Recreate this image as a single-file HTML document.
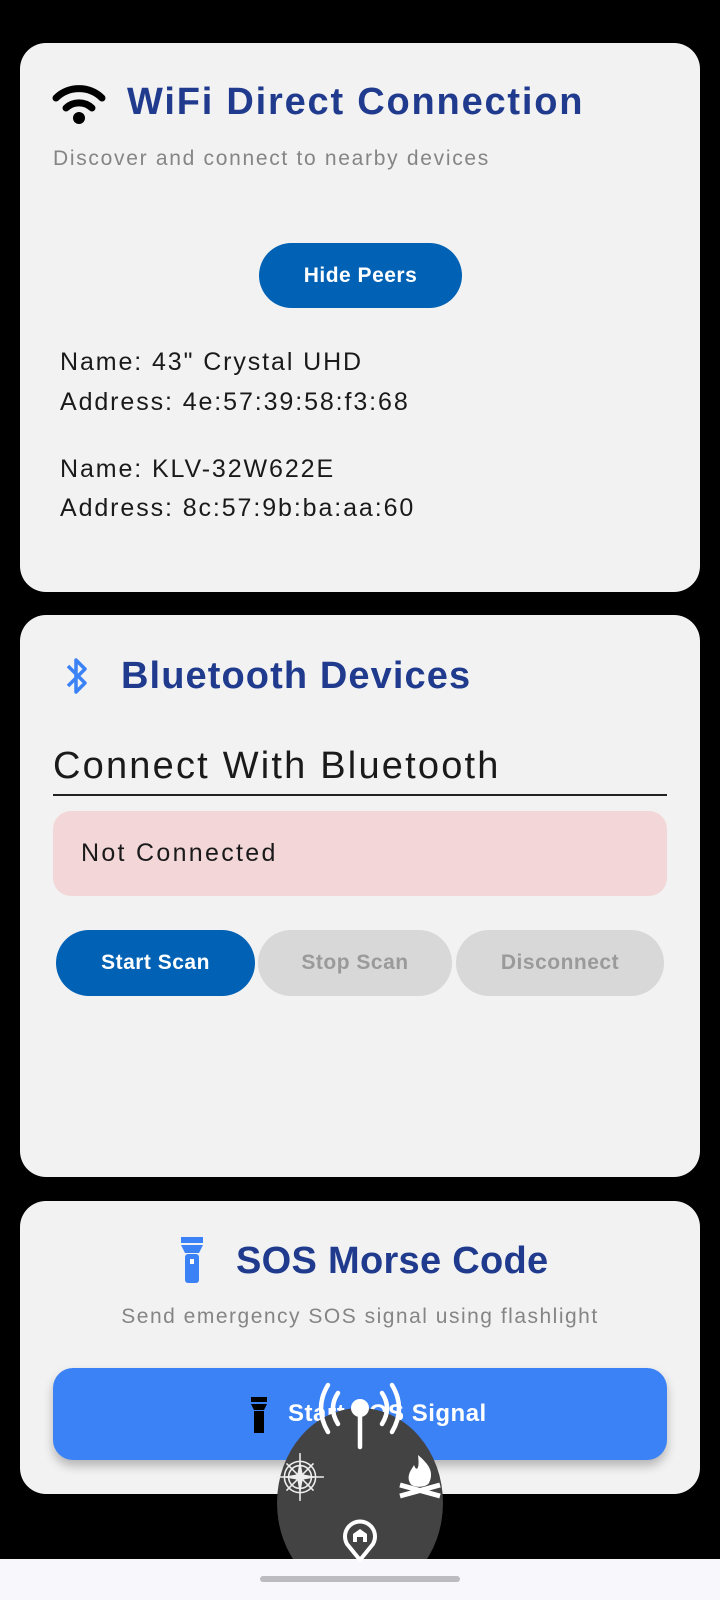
<!DOCTYPE html>
<html><head><meta charset="utf-8"><style>
*{margin:0;padding:0;box-sizing:border-box}
body{width:720px;height:1600px;background:#000;position:relative;overflow:hidden;font-family:"Liberation Sans",sans-serif}
.card{position:absolute;left:20px;width:680px;background:#f2f2f2;border-radius:26px}
.abs{position:absolute;white-space:nowrap}
.title{color:#203b8e;font-weight:bold;font-size:38px;letter-spacing:1.8px}
.btn{position:absolute;border-radius:33px;display:flex;align-items:center;justify-content:center;font-weight:bold;font-size:21px;letter-spacing:0.5px}
.dev{font-size:25px;color:#1a1a1a;letter-spacing:1.9px}
</style></head><body>
<div class="card" style="top:43px;height:549px"></div>
<svg class="abs" style="left:52px;top:82px" width="54" height="42" viewBox="0 0 54 42"><path d="M4 16 A33 33 0 0 1 50 16" stroke="#000" stroke-width="7" fill="none" stroke-linecap="round"/><path d="M14 26 A19 19 0 0 1 40 26" stroke="#000" stroke-width="7" fill="none" stroke-linecap="round"/><circle cx="27" cy="36" r="6" fill="#000"/></svg>
<div class="abs title" style="left:127px;top:81px">WiFi Direct Connection</div>
<div class="abs" style="left:53px;top:147px;font-size:21px;color:#858585;letter-spacing:1.7px">Discover and connect to nearby devices</div>
<div class="btn" style="left:259px;top:243px;width:203px;height:65px;background:#0161b5;color:#fff">Hide Peers</div>
<div class="abs dev" style="left:60px;top:348px">Name: 43" Crystal UHD</div>
<div class="abs dev" style="left:60px;top:388px">Address: 4e:57:39:58:f3:68</div>
<div class="abs dev" style="left:60px;top:455px">Name: KLV-32W622E</div>
<div class="abs dev" style="left:60px;top:494px">Address: 8c:57:9b:ba:aa:60</div>

<div class="card" style="top:615px;height:562px"></div>
<svg class="abs" style="left:62px;top:655px" width="30" height="42" viewBox="0 0 30 42"><path d="M6 11 L23 28 L14 37 V5 L23 14 L6 31" stroke="#3b82f6" stroke-width="3.5" fill="none" stroke-linejoin="round"/></svg>
<div class="abs title" style="left:121px;top:655px;letter-spacing:1.1px">Bluetooth Devices</div>
<div class="abs" style="left:53px;top:745px;font-size:38px;color:#1a1a1a;letter-spacing:2.2px">Connect With Bluetooth</div>
<div class="abs" style="left:53px;top:794px;width:614px;height:2px;background:#222"></div>
<div class="abs" style="left:53px;top:811px;width:614px;height:85px;background:#f3d7d8;border-radius:18px"></div>
<div class="abs" style="left:81px;top:839px;font-size:25px;color:#1a1a1a;letter-spacing:2.3px">Not Connected</div>
<div class="btn" style="left:56px;top:930px;width:199px;height:66px;background:#0161b5;color:#fff">Start Scan</div>
<div class="btn" style="left:258px;top:930px;width:194px;height:66px;background:#d8d8d8;color:#9a9a9a">Stop Scan</div>
<div class="btn" style="left:456px;top:930px;width:208px;height:66px;background:#d8d8d8;color:#9a9a9a">Disconnect</div>

<div class="card" style="top:1201px;height:293px"></div>
<svg class="abs" style="left:180px;top:1237px" width="24" height="46" viewBox="0 0 24 46"><rect x="1" y="0" width="22" height="6" fill="#3b82f6"/><path d="M1 8 H23 L19 16 H5 Z" fill="#3b82f6"/><rect x="5" y="17" width="14" height="29" rx="3" fill="#3b82f6"/><rect x="10" y="22" width="4" height="5" fill="#fff"/></svg>
<div class="abs title" style="left:236px;top:1240px;letter-spacing:0.3px">SOS Morse Code</div>
<div class="abs" style="left:0;width:720px;text-align:center;top:1305px;font-size:21px;color:#858585;letter-spacing:1.5px">Send emergency SOS signal using flashlight</div>
<div class="abs" style="left:53px;top:1368px;width:614px;height:92px;background:#3b82f6;border-radius:20px;box-shadow:0 6px 10px rgba(0,0,0,0.25)"></div>
<svg class="abs" style="left:250px;top:1397px" width="18" height="36" viewBox="0 0 18 36"><rect x="1" y="0" width="16" height="5" fill="#000"/><path d="M1 7 H17 L14 13 H4 Z" fill="#000"/><rect x="4" y="14" width="10" height="22" fill="#000"/></svg>
<div class="abs" style="left:288px;top:1400px;font-size:24px;color:#fff;font-weight:bold;letter-spacing:0.5px">Start SOS Signal</div>

<div class="abs" style="left:0;top:1559px;width:720px;height:41px;background:#f8f8fc"></div>
<div class="abs" style="left:260px;top:1576px;width:200px;height:6px;background:#bcbcc0;border-radius:3px"></div>
<div class="abs" style="left:277px;top:1408px;width:166px;height:151px;overflow:hidden"><div style="width:166px;height:190px;border-radius:50%;background:#434343"></div></div>
<svg class="abs" style="left:318px;top:1382px" width="84" height="68" viewBox="0 0 84 68"><g stroke="#fff" stroke-width="4.5" fill="none" stroke-linecap="round"><path d="M10 3 Q-4 26 10 50"/><path d="M74 3 Q88 26 74 50"/><path d="M20 11 Q10 26 20 42"/><path d="M64 11 Q74 26 64 42"/><line x1="42" y1="30" x2="42" y2="65"/></g><circle cx="42" cy="26" r="9" fill="#fff"/></svg>
<svg class="abs" style="left:274px;top:1451px" width="52" height="52" viewBox="0 0 50 50"><g stroke="#eee" stroke-width="1.5" fill="none"><circle cx="25" cy="25" r="15"/><circle cx="25" cy="25" r="11"/><line x1="25" y1="2" x2="25" y2="48"/><line x1="2" y1="25" x2="48" y2="25"/><line x1="12" y1="12" x2="38" y2="38"/><line x1="38" y1="12" x2="12" y2="38"/></g><path d="M25 8 L28 25 L25 42 L22 25Z M8 25 L25 22 L42 25 L25 28Z" fill="#eee"/></svg>
<svg class="abs" style="left:398px;top:1453px" width="44" height="46" viewBox="0 0 44 46"><path d="M20 2 C32 12 36 20 31 30 C28 35 14 35 12 30 C8 22 14 16 16 12 C18 18 22 18 20 2Z" fill="#fff"/><path d="M2 32 L42 43 M2 43 L42 32" stroke="#fff" stroke-width="5"/></svg>
<svg class="abs" style="left:341px;top:1518px" width="38" height="44" viewBox="0 0 38 44"><path d="M19 42 L6 26 A15 15 0 1 1 32 26 Z" stroke="#fff" stroke-width="4" fill="none" stroke-linejoin="round"/><path d="M12 24 V16 L19 11 L26 16 V24 H22 V19 H16 V24Z" fill="#fff"/></svg>
</body></html>
